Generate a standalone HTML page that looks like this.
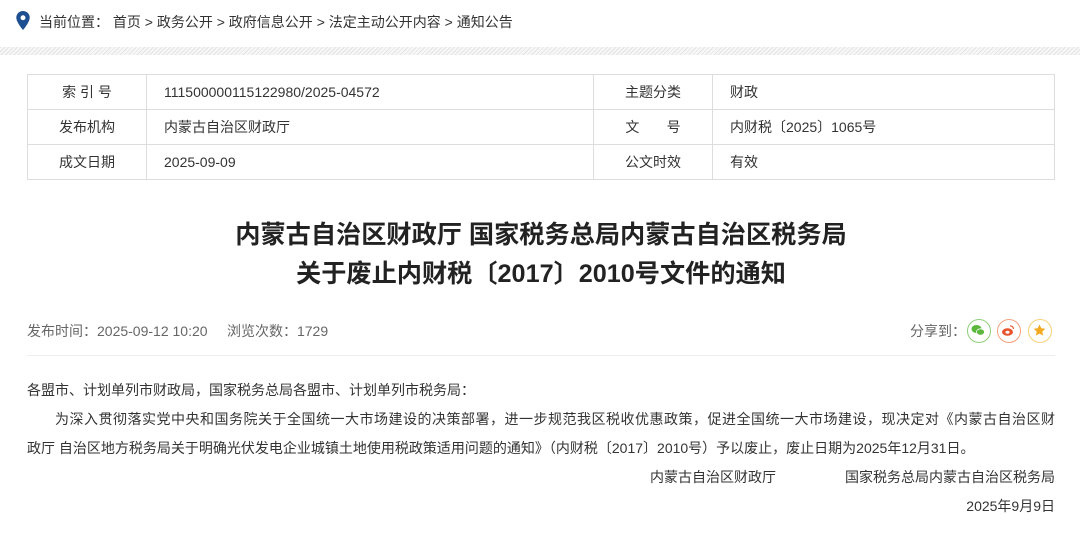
<!DOCTYPE html>
<html><head><meta charset="utf-8"><style>
*{margin:0;padding:0;box-sizing:border-box}
body{width:1080px;height:540px;background:#fff;font-family:"Liberation Sans","Noto Sans CJK SC",sans-serif;color:#333;font-size:14px;position:relative;overflow:hidden}
.abs{position:absolute;white-space:nowrap}
.hatch{position:absolute;left:0;top:47px;width:1080px;height:8px;background:repeating-linear-gradient(135deg,#e4e4e4 0 1px,#f7f7f7 1px 3px)}
table{position:absolute;left:27px;top:74px;width:1028px;border-collapse:collapse}
td{border:1px solid #ddd;height:35px;font-size:14px;color:#333;padding:0}
td.l{text-align:center;width:119px}
td.v{padding-left:17px}
.title{position:absolute;left:0;width:1082px;text-align:center;font-size:25.2px;font-weight:bold;color:#222}
.ic{position:absolute;top:319px;width:24px;height:24px;border-radius:50%;border:1.5px solid}
.j{position:absolute;left:27px;width:1028px;text-align:justify;text-align-last:justify;white-space:nowrap}
</style></head><body>
<svg class="abs" style="left:16px;top:11px" width="14" height="19" viewBox="0 0 12 17"><path d="M6 0C2.7 0 0 2.6 0 5.9 0 10 6 17 6 17s6-7 6-11.1C12 2.6 9.3 0 6 0z" fill="#1d4f91"/><circle cx="6" cy="6" r="2.2" fill="#fff"/></svg>
<div class="abs" style="left:39px;top:12px;color:#333">当前位置：&nbsp;首页 &gt; 政务公开 &gt; 政府信息公开 &gt; 法定主动公开内容 &gt; 通知公告</div>
<div class="hatch"></div>
<table>
<tr><td class="l">索 引 号</td><td class="v" style="width:447px">111500000115122980/2025-04572</td><td class="l">主题分类</td><td class="v">财政</td></tr>
<tr><td class="l">发布机构</td><td class="v">内蒙古自治区财政厅</td><td class="l">文&nbsp;&nbsp;&nbsp;&nbsp;&nbsp;&nbsp;&nbsp;号</td><td class="v">内财税〔2025〕1065号</td></tr>
<tr><td class="l">成文日期</td><td class="v">2025-09-09</td><td class="l">公文时效</td><td class="v">有效</td></tr>
</table>
<div class="title" style="top:215px">内蒙古自治区财政厅 国家税务总局内蒙古自治区税务局</div>
<div class="title" style="top:254px">关于废止内财税〔2017〕2010号文件的通知</div>
<div class="abs" style="left:27px;top:321px;color:#666">发布时间：2025-09-12 10:20&nbsp;&nbsp;&nbsp;&nbsp;&nbsp;浏览次数：1729</div>
<div class="abs" style="left:910px;top:321px;color:#666">分享到：</div>
<div class="ic" style="left:967px;border-color:#8fd07a"><svg width="21" height="21" viewBox="0 0 21 21"><ellipse cx="8.5" cy="9" rx="5" ry="4" fill="#5cb83c"/><ellipse cx="12.5" cy="12" rx="4" ry="3.2" fill="#5cb83c" stroke="#fff" stroke-width=".8"/></svg></div>
<div class="ic" style="left:997px;border-color:#f4a07c"><svg width="21" height="21" viewBox="0 0 21 21"><ellipse cx="9.5" cy="12" rx="5.5" ry="3.8" fill="#e8542c"/><ellipse cx="9.5" cy="12.3" rx="2" ry="1.5" fill="#fff"/><path d="M12 6a3 3 0 0 1 3.5 3" stroke="#e8542c" stroke-width="1.2" fill="none"/></svg></div>
<div class="ic" style="left:1028px;border-color:#f7d07a"><svg width="21" height="21" viewBox="0 0 21 21"><path d="M10.5 4.5l1.8 3.8 4 .5-3 2.8.8 4-3.6-2-3.6 2 .8-4-3-2.8 4-.5z" fill="#f3a920"/></svg></div>
<div style="position:absolute;left:27px;top:355px;width:1028px;height:1px;background:#eee"></div>
<div class="abs" style="left:27px;top:380px">各盟市、计划单列市财政局，国家税务总局各盟市、计划单列市税务局：</div>
<div class="j" style="top:409px;padding-left:28px">为深入贯彻落实党中央和国务院关于全国统一大市场建设的决策部署，进一步规范我区税收优惠政策，促进全国统一大市场建设，现决定对《内蒙古自治区财</div>
<div class="abs" style="left:27px;top:438px">政厅 自治区地方税务局关于明确光伏发电企业城镇土地使用税政策适用问题的通知》（内财税〔2017〕2010号）予以废止，废止日期为2025年12月31日。</div>
<div class="abs" style="left:650px;top:467px">内蒙古自治区财政厅</div>
<div class="abs" style="left:841px;top:467px;width:214px;text-align:right">国家税务总局内蒙古自治区税务局</div>
<div class="abs" style="left:900px;top:496px;width:155px;text-align:right">2025年9月9日</div>
</body></html>
